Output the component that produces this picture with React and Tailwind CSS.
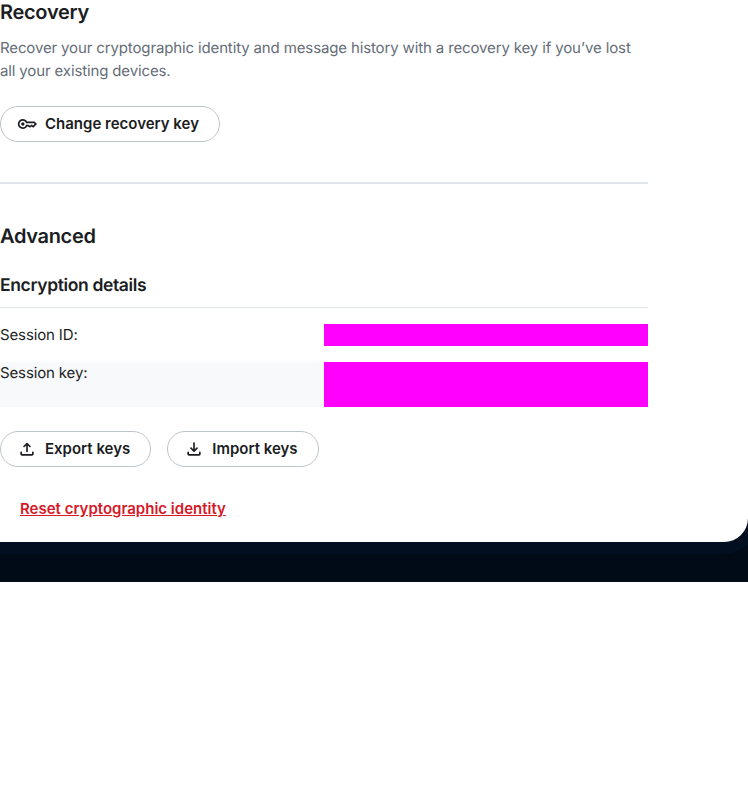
import React from "react";

const KeyIcon = () => (
  <svg width="20" height="20" viewBox="0 0 24 24" fill="currentColor">
    <path d="M7 14q-.824 0-1.412-.588A1.93 1.93 0 0 1 5 12q0-.825.588-1.412A1.93 1.93 0 0 1 7 10q.824 0 1.412.588Q9 11.175 9 12t-.588 1.412A1.93 1.93 0 0 1 7 14m0 4q-2.5 0-4.25-1.75T1 12t1.75-4.25T7 6q1.675 0 3.038.825A6.2 6.2 0 0 1 12.2 9H21l3 3-4.5 4.5-2-1.5-2 1.5-2.125-1.5H12.2a6.2 6.2 0 0 1-2.162 2.175A5.76 5.76 0 0 1 7 18m0-2q1.4 0 2.463-.85A4.03 4.03 0 0 0 10.875 13H14l1.45 1.025L17.5 12.5l1.775 1.375L21.15 12l-1-1h-9.275a4.03 4.03 0 0 0-1.412-2.15Q8.4 8 7 8 5.35 8 4.175 9.175T3 12t1.175 2.825T7 16" />
  </svg>
);

const ShareIcon = () => (
  <svg width="20" height="20" viewBox="0 0 24 24" fill="currentColor">
    <path d="M12 16a.97.97 0 0 1-.713-.287A.97.97 0 0 1 11 15V7.85L9.125 9.725q-.3.3-.7.3T7.7 9.7a.93.93 0 0 1-.288-.713A.98.98 0 0 1 7.7 8.3l3.6-3.6q.15-.15.325-.213.175-.062.375-.062t.375.062a.9.9 0 0 1 .325.213l3.6 3.6q.3.3.287.712a.98.98 0 0 1-.287.688q-.3.3-.712.313a.93.93 0 0 1-.713-.288L13 7.85V15q0 .424-.287.713A.97.97 0 0 1 12 16m-6 4q-.824 0-1.412-.587A1.93 1.93 0 0 1 4 18v-2q0-.424.287-.713A.97.97 0 0 1 5 15q.424 0 .713.287Q6 15.576 6 16v2h12v-2q0-.424.288-.713A.97.97 0 0 1 19 15q.424 0 .712.287.288.288.288.713v2q0 .824-.587 1.413A1.93 1.93 0 0 1 18 20z" />
  </svg>
);

const DownloadIcon = () => (
  <svg width="20" height="20" viewBox="0 0 24 24" fill="currentColor">
    <path d="M12 15.575q-.2 0-.375-.062a.9.9 0 0 1-.325-.213l-3.6-3.6a.92.92 0 0 1-.288-.713A.98.98 0 0 1 7.7 10.3q.3-.3.713-.312a.93.93 0 0 1 .712.287L11 12.15V5q0-.424.287-.713A.97.97 0 0 1 12 4q.424 0 .713.287Q13 4.576 13 5v7.15l1.875-1.875q.3-.3.713-.287.412.012.712.312.274.3.287.688a.92.92 0 0 1-.287.712l-3.6 3.6q-.15.15-.325.213a1.1 1.1 0 0 1-.375.062M6 20q-.824 0-1.412-.587A1.93 1.93 0 0 1 4 18v-2q0-.424.287-.713A.97.97 0 0 1 5 15q.424 0 .713.287Q6 15.576 6 16v2h12v-2q0-.424.288-.713A.97.97 0 0 1 19 15q.424 0 .712.287.288.288.288.713v2q0 .824-.587 1.413A1.93 1.93 0 0 1 18 20z" />
  </svg>
);

function PillButton({ icon, children }) {
  return (
    <button className="flex h-9 items-center gap-2 rounded-full border border-[#bdc4cc] pr-5 pl-4 text-[15px] leading-[22px] font-semibold">
      {icon}
      {children}
    </button>
  );
}

export default function App() {
  return (
    <div className="h-[791px] w-[748px] overflow-hidden bg-white font-['Inter',sans-serif] text-[#1b1d22] antialiased [text-rendering:geometricPrecision]">
      <div className="h-[582px] bg-[#010a17]">
        <div className="w-[760px] rounded-br-[36px] bg-[#010f20] pr-3 pb-3">
          <main className="h-[542px] rounded-br-[24px] bg-white">
            <div className="w-[648px]">
              <section>
                <h2 className="h-7 text-[20px] leading-[25px] font-semibold tracking-[-0.3px]">Recovery</h2>
                <p className="mt-2 text-[15px] leading-[23px] tracking-[-0.135px] text-[#656d77]">
                  Recover your cryptographic identity and message history with a recovery key if you’ve lost
                  <br />
                  all your existing devices.
                </p>
                <div className="mt-6 flex">
                  <PillButton icon={<KeyIcon />}>Change recovery key</PillButton>
                </div>
              </section>
              <hr className="mt-10 border-t-2 border-[#e1e6ec]" />
              <section className="pt-10">
                <h2 className="text-[20px] leading-[25px] font-semibold tracking-[-0.32px]">Advanced</h2>
                <h3 className="mt-6 h-[35px] border-b border-[#e1e6ec] pt-px text-[17.5px] leading-[24px] font-semibold tracking-[-0.37px]">
                  Encryption details
                </h3>
                <dl className="mt-4 text-[15px] leading-[22px] tracking-[-0.135px]">
                  <div className="flex h-[22px]">
                    <dt className="w-1/2">Session ID:</dt>
                    <dd className="w-1/2 bg-[#ff00ff]" />
                  </div>
                  <div className="mt-4 flex h-[45px] bg-[#f7f9fa]">
                    <dt className="w-1/2">Session key:</dt>
                    <dd className="w-1/2 bg-[#ff00ff]" />
                  </div>
                </dl>
                <div className="mt-6 flex gap-4">
                  <PillButton icon={<ShareIcon />}>Export keys</PillButton>
                  <PillButton icon={<DownloadIcon />}>Import keys</PillButton>
                </div>
                <button className="mt-6 ml-5 h-9 text-[15px] leading-[22px] font-semibold text-[#d51928] underline">
                  Reset cryptographic identity
                </button>
              </section>
            </div>
          </main>
        </div>
      </div>
    </div>
  );
}
